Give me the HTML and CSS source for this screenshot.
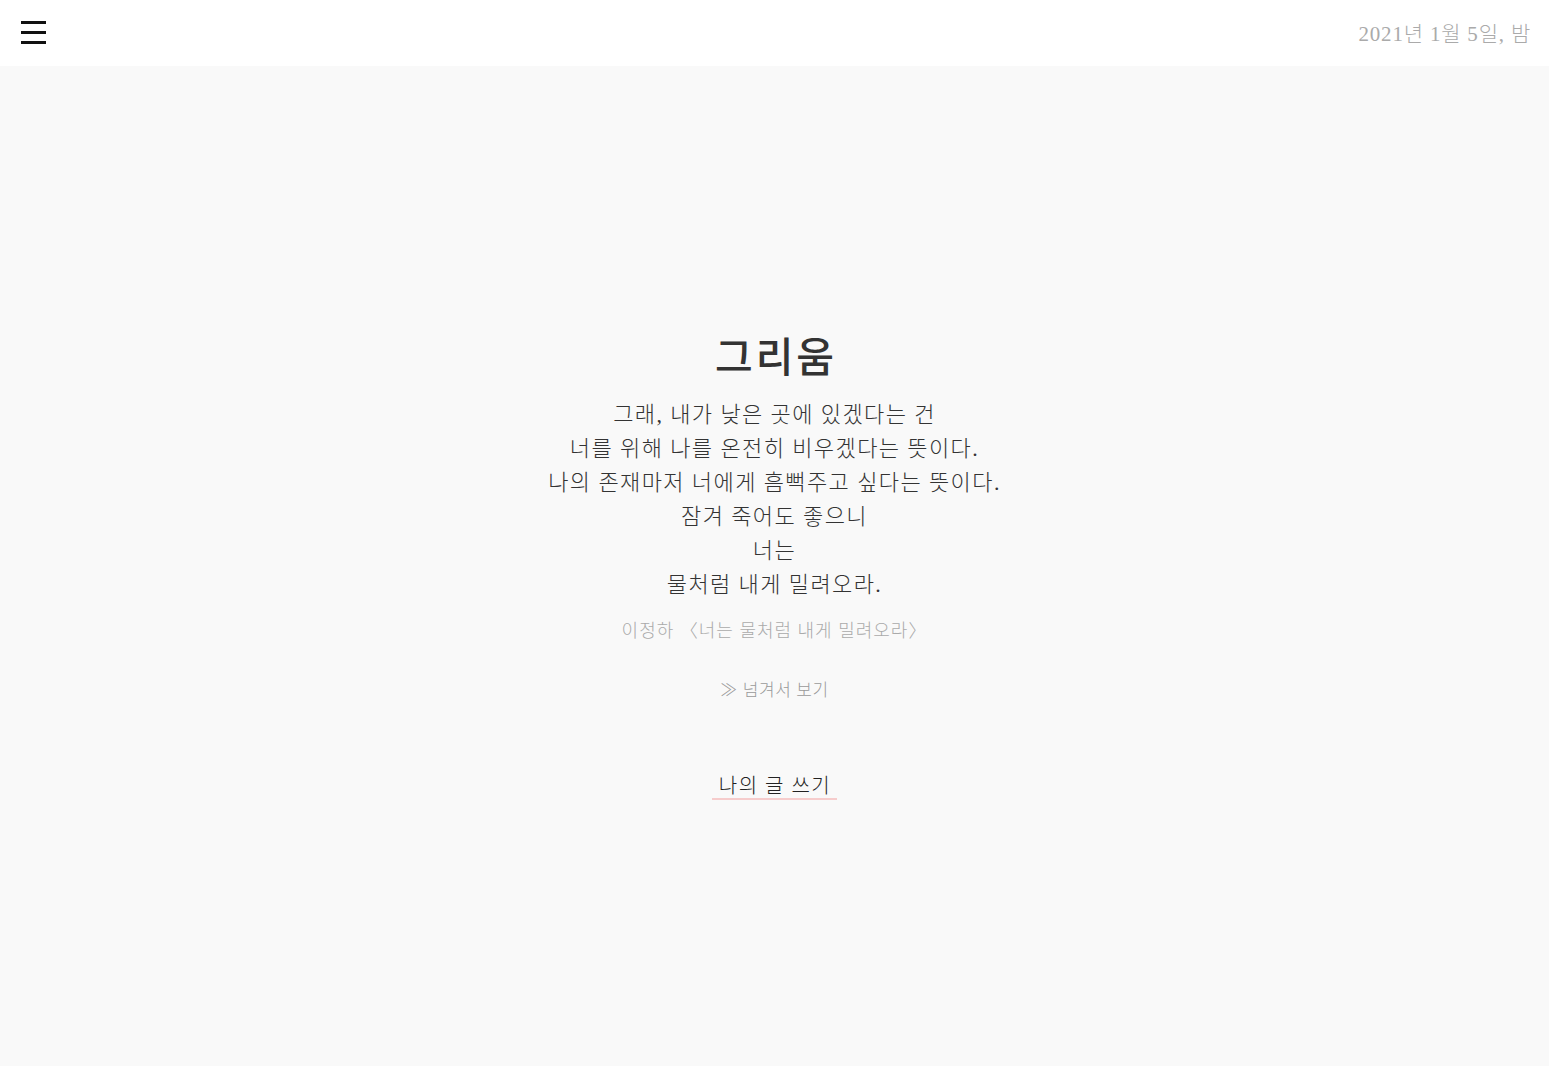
FILE: index.html
```html
<!DOCTYPE html>
<html lang="ko">
<head>
<meta charset="utf-8">
<title>그리움</title>
<link rel="stylesheet" href="styles.css">
</head>
<body>
<header class="topbar">
  <button class="menu" aria-label="메뉴">
    <span class="bar"></span><span class="bar"></span><span class="bar"></span>
  </button>
  <div class="date">2021년 1월 5일, 밤</div>
</header>
<main class="stage">
  <article class="poem">
    <h1 class="title">그리움</h1>
    <div class="verse">
      <p>그래, 내가 낮은 곳에 있겠다는 건</p>
      <p>너를 위해 나를 온전히 비우겠다는 뜻이다.</p>
      <p>나의 존재마저 너에게 흠뻑주고 싶다는 뜻이다.</p>
      <p>잠겨 죽어도 좋으니</p>
      <p>너는</p>
      <p>물처럼 내게 밀려오라.</p>
    </div>
    <p class="source">이정하 〈너는 물처럼 내게 밀려오라〉</p>
    <p class="next">≫ 넘겨서 보기</p>
    <a class="write" href="#">나의 글 쓰기</a>
  </article>
</main>
</body>
</html>
```
FILE: styles.css
```css
html, body {
  margin: 0;
  padding: 0;
}
body {
  background: #f9f9f9;
  font-family: "Liberation Serif", "Noto Sans CJK KR", serif;
  color: #333;
}
.topbar {
  height: 66px;
  background: #fff;
  display: flex;
  align-items: center;
  justify-content: space-between;
  padding: 0 19px 0 21px;
}
.menu {
  border: 0;
  background: none;
  padding: 0;
  width: 25px;
  height: 23px;
  display: flex;
  flex-direction: column;
  justify-content: space-between;
  margin-top: -1px;
}
.bar {
  display: block;
  height: 3px;
  background: #111;
}
.date {
  font-size: 21px;
  color: #aaa;
  font-weight: 300;
  letter-spacing: 0.8px;
  margin-right: -1px;
  margin-top: -2px;
}
.stage {
  min-height: 1000px;
  display: flex;
  align-items: center;
  justify-content: center;
}
.poem {
  display: flex;
  flex-direction: column;
  align-items: center;
  text-align: center;
  margin-top: -1px;
}
.title {
  margin: 0;
  font-size: 41px;
  font-weight: 500;
  color: #333;
  line-height: 52px;
  letter-spacing: 3px;
  margin-right: -3px;
}
.verse {
  margin-top: 14px;
}
.verse p {
  margin: 0;
  font-size: 22px;
  line-height: 34px;
  font-weight: 300;
  color: #333;
  letter-spacing: 1.4px;
}
.source {
  margin: 16px 0 0;
  font-size: 18px;
  line-height: 26px;
  color: #aaa;
  font-weight: 300;
  letter-spacing: 1px;
}
.next {
  margin: 34px 0 0;
  font-size: 17px;
  line-height: 26px;
  color: #999;
  font-weight: 300;
  letter-spacing: 0.6px;
}
.write {
  margin-top: 70px;
  font-size: 20px;
  line-height: 24px;
  color: #222;
  text-decoration: none;
  padding: 0 6px 0 7px;
  border-bottom: 2px solid #f6cccc;
  font-weight: 300;
  letter-spacing: 1.5px;
}
```
